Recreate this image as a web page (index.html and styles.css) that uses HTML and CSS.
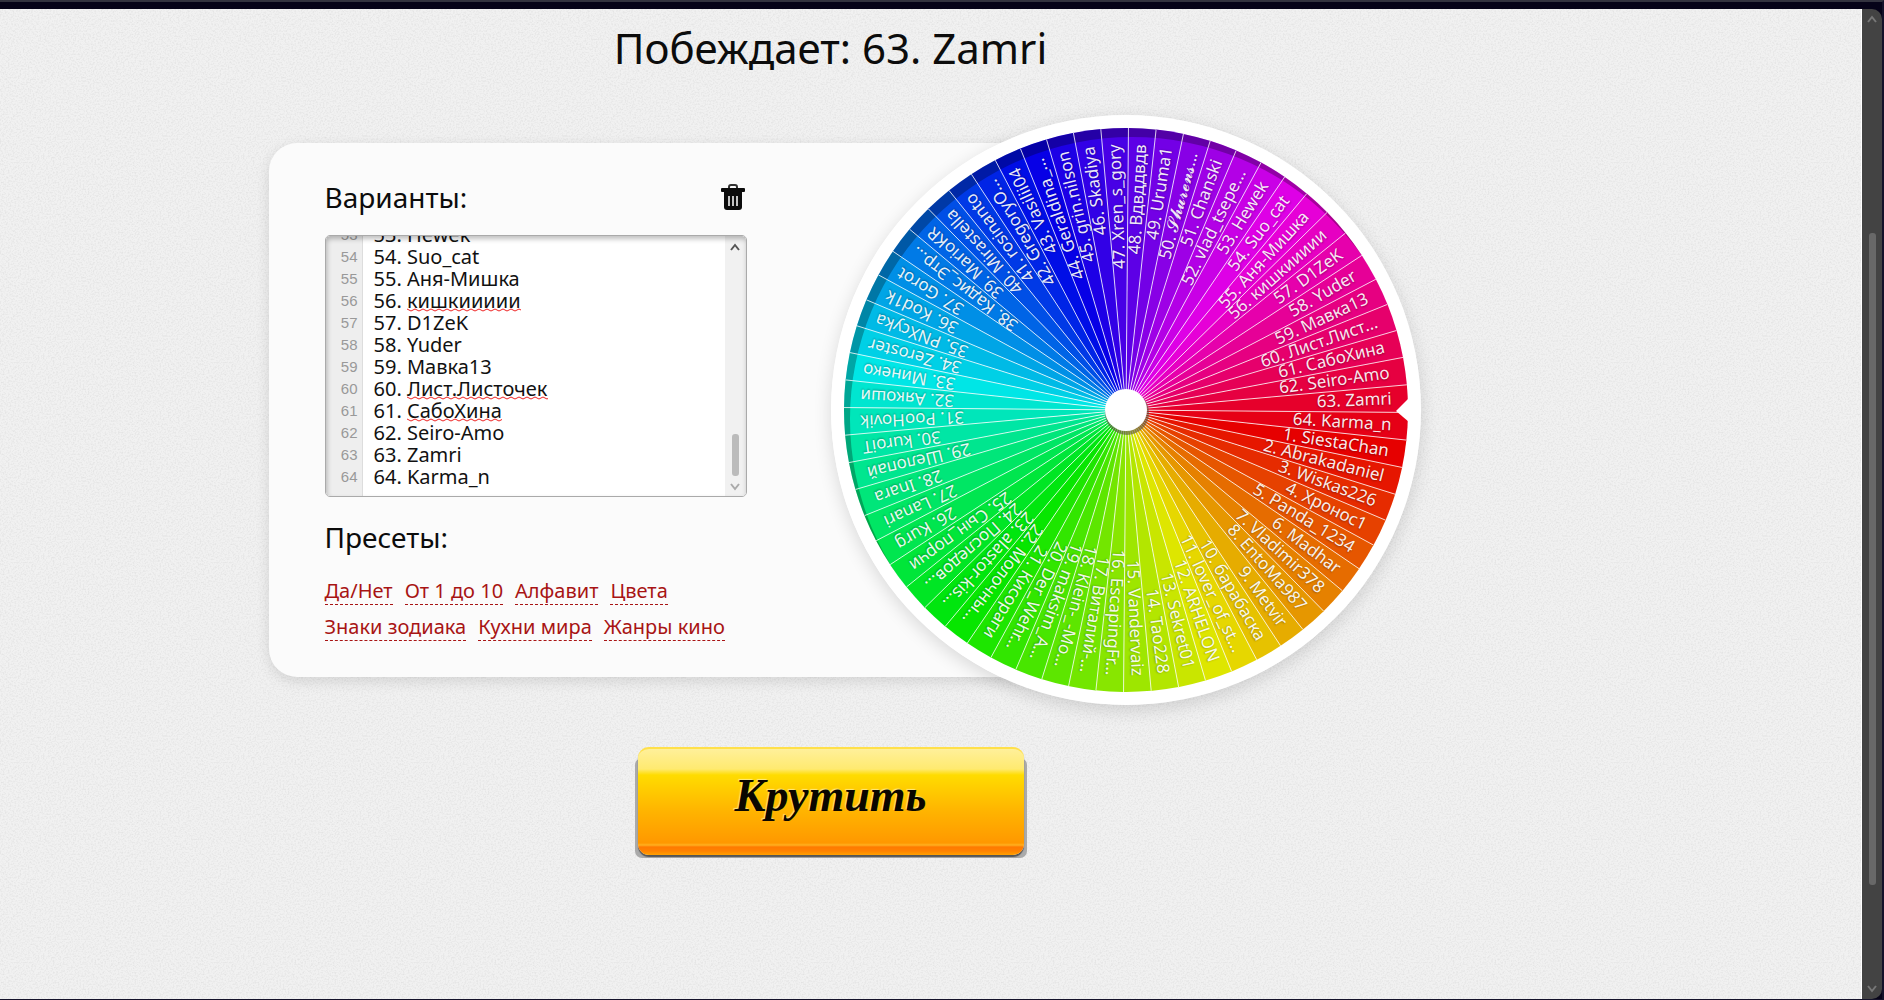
FILE: index.html
```html
<!DOCTYPE html>
<html lang="ru">
<head>
  <meta charset="utf-8">
  <title>Колесо фортуны</title>
  <link rel="stylesheet" href="styles.css">
</head>
<body>
  <div class="window">
    <main class="page">
      <h1 class="winner">Побеждает: 63. Zamri</h1>

      <div class="game">
        <section class="panel">
          <div class="panel-head">
            <label for="variants">Варианты:</label>
            <button type="button" class="clear" id="clear" aria-label="Очистить">
              <svg width="24" height="26" viewBox="0 0 24 26">
                <path d="M8 4V3Q8 1 10 1h4q2 0 2 2v1" fill="none" stroke="#333" stroke-width="2"/>
                <rect x="0" y="4" width="24" height="4" rx="1" fill="#0c0c0c"/>
                <path d="M3 8h18v15q0 3-3 3H6q-3 0-3-3z" fill="#0c0c0c"/>
                <path d="M8 12v10M12 12v10M16 12v10" stroke="#c4c4c4" stroke-width="2"/>
              </svg>
            </button>
          </div>

          <div class="editor">
            <div class="lines" id="lines" aria-hidden="true"></div>
            <div class="field">
              <div class="marks" id="marks" aria-hidden="true"></div>
              <textarea id="variants" spellcheck="false" wrap="off"></textarea>
            </div>
            <div class="editor-scroll" aria-hidden="true">
              <svg width="10" height="8" viewBox="0 0 10 8"><path d="M1 7 5 2l4 5" fill="none" stroke="#555" stroke-width="2"/></svg>
              <div class="editor-track" id="track"><div class="editor-thumb" id="thumb"></div></div>
              <svg width="10" height="8" viewBox="0 0 10 8"><path d="M1 1 5 6l4-5" fill="none" stroke="#aaa" stroke-width="2"/></svg>
            </div>
          </div>

          <h2>Пресеты:</h2>
          <nav class="presets">
            <a href="#">Да/Нет</a>
            <a href="#">От 1 до 10</a>
            <a href="#">Алфавит</a>
            <a href="#">Цвета</a>
            <a href="#">Знаки зодиака</a>
            <a href="#">Кухни мира</a>
            <a href="#">Жанры кино</a>
          </nav>
        </section>

        <div class="wheel">
          <svg viewBox="-295 -295 590 590" role="img" aria-label="Колесо">
            <clipPath id="disc"><circle r="282"/></clipPath>
            <circle r="295" fill="#fff"/>
            <g id="slices"></g>
            <g clip-path="url(#disc)">
              <path class="rim" fill-rule="evenodd" d="M-300-300H300V300H-300zM-276 9a282 282 0 1 0 564 0a282 282 0 1 0-564 0z"/>
            </g>
            <g id="rays"></g>
            <g id="labels"></g>
            <circle class="hub-shadow" cx="1" cy="3" r="22"/>
            <circle r="21" fill="#fff"/>
            <path d="M270 1 283-12V12z" fill="#fff"/>
          </svg>
        </div>
      </div>

      <button type="button" class="spin">Крутить</button>
    </main>

    <div class="page-scroll" aria-hidden="true">
      <svg width="10" height="8" viewBox="0 0 10 8"><path d="M1 7 5 2l4 5" fill="none" stroke="#777" stroke-width="2"/></svg>
      <div class="page-track"><div class="page-thumb"></div></div>
      <svg width="10" height="8" viewBox="0 0 10 8"><path d="M1 1 5 6l4-5" fill="none" stroke="#777" stroke-width="2"/></svg>
    </div>
  </div>

  <script src="wheel.js"></script>
</body>
</html>
```

FILE: styles.css
```css
* {
  box-sizing: border-box;
}
body {
  margin: 0;
  font-family: "Noto Sans", "Open Sans", sans-serif;
  color: #0c0c0c;
  background-color: #060318;
}
h1, h2 {
  margin: 0;
  font-weight: normal;
}
button {
  border: none;
  cursor: pointer;
}

/* window */
.window {
  display: flex;
  min-height: 100vh;
  border-top: 2px solid #33333f;
  border-right: 2px solid #14122a;
  border-bottom: 1px solid #14122a;
  padding-top: 7px;
}
.page {
  flex: 1;
  display: flex;
  flex-direction: column;
  align-items: center;
  padding: 10px 200px 60px 0;
  background-color: #f1f1f1;
  background-image: url("data:image/svg+xml,%3Csvg xmlns='http://www.w3.org/2000/svg' width='200' height='200'%3E%3Cfilter id='n'%3E%3CfeTurbulence type='fractalNoise' baseFrequency='.6' numOctaves='2' stitchTiles='stitch'/%3E%3CfeColorMatrix values='0 0 0 0 0 0 0 0 0 0 0 0 0 0 0 .14 0 0 0 -.06'/%3E%3C/filter%3E%3Crect width='200' height='200' filter='url(%23n)'/%3E%3C/svg%3E");
  border-right: 1px solid #fff;
}
.page-scroll {
  display: flex;
  flex-direction: column;
  align-items: center;
  width: 20px;
  padding: 6px 0;
  background-color: #434343;
  border-radius: 0 10px 10px 0;
}
.page-track {
  flex: 1;
  padding: 210px 0 100px;
  display: flex;
}
.page-thumb {
  width: 7px;
  border-radius: 3px;
  background-color: #686868;
}

.winner {
  font-size: 42px;
  line-height: 58px;
  margin-bottom: 38px;
}
.game {
  display: flex;
  align-items: center;
  width: 1124px;
  margin-bottom: 42px;
}

/* panel */
.panel {
  flex: none;
  width: 858px;
  padding: 35px 56px 36px;
  background-color: #fbfbfb;
  border-radius: 28px;
  box-shadow: 0 4px 14px rgba(0, 0, 0, 0.12);
}
.panel-head {
  display: flex;
  justify-content: space-between;
  align-items: center;
  width: 420px;
  margin-bottom: 19px;
}
.panel-head label,
.panel h2 {
  font-size: 28px;
  line-height: 38px;
}
.clear {
  padding: 0;
  width: 24px;
  height: 26px;
  background: none;
}
.clear svg {
  display: block;
}

.editor {
  display: flex;
  width: 422px;
  height: 262px;
  margin-bottom: 21px;
  border: 1px solid #aaa;
  border-radius: 5px;
  background-color: #fff;
  overflow: hidden;
  position: relative;
}
.editor::after {
  content: "";
  position: absolute;
  inset: 0;
  border-radius: 4px;
  box-shadow: inset 1px 3px 5px rgba(0, 0, 0, 0.25);
  pointer-events: none;
}
.lines {
  width: 37px;
  padding: 2px 4px 8px 0;
  overflow: hidden;
  background-color: #eee;
  border-right: 1px solid #ddd;
  font: 15px/22px "Liberation Sans", Arial, sans-serif;
  color: #999;
  text-align: right;
  white-space: pre;
}
.field {
  flex: 1;
  position: relative;
}
.marks,
.field textarea {
  width: 100%;
  height: 100%;
  padding: 2px 11px 8px;
  overflow: hidden;
}
.field textarea {
  display: block;
  position: relative;
  border: none;
  outline: none;
  background: none;
  font: 20px/22px "Noto Sans", "Open Sans", sans-serif;
  color: #111;
  white-space: pre;
  resize: none;
  overflow-y: scroll;
  scrollbar-width: none;
}
.marks {
  position: absolute;
  top: 0;
  left: 0;
}
.marks div {
  height: 22px;
}
.marks .wrong {
  background: url("data:image/svg+xml,%3Csvg xmlns='http://www.w3.org/2000/svg' width='8' height='4'%3E%3Cpath d='M0 1 4 3 8 1' stroke='%23e22' fill='none'/%3E%3C/svg%3E") 0 100% repeat-x;
}
.editor-scroll {
  display: flex;
  flex-direction: column;
  align-items: center;
  gap: 4px;
  width: 21px;
  padding: 7px 0 5px;
  background-color: #f1f1f1;
}
.editor-track {
  flex: 1;
  margin-bottom: 3px;
}
.editor-thumb {
  width: 7px;
  border-radius: 3px;
  background-color: #bbb;
}

.panel h2 {
  margin-bottom: 21px;
}
.presets {
  display: flex;
  flex-wrap: wrap;
  gap: 8px 12px;
  width: 420px;
}
.presets a {
  font-size: 20px;
  line-height: 27px;
  color: #a81414;
  text-decoration: none;
  border-bottom: 1px dashed #a81414;
}

/* wheel */
.wheel {
  flex: none;
  width: 590px;
  height: 590px;
  margin-left: -296px;
  border-radius: 50%;
  box-shadow: 0 5px 18px rgba(0, 0, 0, 0.14);
}
.wheel svg {
  display: block;
  width: 100%;
}
.rim {
  fill: rgba(0, 0, 0, 0.28);
}
.hub-shadow {
  fill: rgba(90, 80, 60, 0.6);
}
#rays line {
  stroke: #fff;
  stroke-opacity: 0.8;
  stroke-width: 1px;
}
#labels text {
  font-size: 17px;
  fill: #fff;
  fill-opacity: 0.92;
  text-anchor: end;
  text-shadow: 0 1px 2px rgba(0, 0, 0, 0.35);
}

.spin {
  width: 386px;
  height: 108px;
  padding: 0 0 14px;
  border-radius: 11px;
  border-top: 2px solid #ffe04a;
  background-image: linear-gradient(#fff09a 0, #ffea70 20px, #ffdc00 26px, #ffb400 62px, #ff9800 94px, #ffb020 96px, #ff7a00 98px, #ff8200 102px, #ffa000 106px);
  box-shadow: 0 2px 1px #555, -7px 7px 0 -4px #aaa, 7px 7px 0 -4px #aaa;
  font: italic bold 46px "Liberation Serif", "Times New Roman", serif;
  color: #0a0600;
  text-shadow: -1px -1px 1px rgba(255, 240, 160, 0.8);
}
```

FILE: wheel.js
```js
var names = [
  'SiestaChan', 'Abrakadaniel', 'Wiskas226', 'Хронос1', 'Panda_1234', 'Madhar', 'Vladimir378', 'EntoMa987',
  'Metvir', 'барабаска', 'lover_of_st...', 'ARHELON', 'Sekret01', 'Tao228', 'Vandervaiz', 'EscapingFr...',
  'Виталий-...', 'Klein-_-Mo...', 'maksim_A...', 'Der_Wehr...', 'Кисораги', 'Молочны...', 'alastor-kis...', 'Последов...',
  'Сын_порчи', 'Kurg', 'Lanari', 'Inara', 'Шелопай', 'kuroiT', 'PooHovik', 'Аякоши',
  'Минеко', 'Zeroster', 'PNXcyka', 'Kod1k', 'Gorot', 'Кадис_Этр...', 'MarioKR', 'Mirastella',
  'rosinanto', 'GregoryO...', 'Vasilii04', 'Geraldina_...', 'grin.nilson', 'Skadiya', 'Xren_s_gory', 'Вдвддвдв',
  'Uruma1', '𝓢𝓱𝓾𝓻𝓮𝓷𝓼...', 'Chanski', 'vlad_tsepe...', 'Hewek', 'Suo_cat', 'Аня-Мишка', 'кишкиииии',
  'D1ZeK', 'Yuder', 'Мавка13', 'Лист.Листочек', 'СабоХина', 'Seiro-Amo', 'Zamri', 'Karma_n'
];
var shortNames = { 'Лист.Листочек': 'Лист.Лист...' };
var misspelled = ['кишкиииии', 'Лист.Листочек', 'СабоХина'];

var area = document.getElementById('variants');
var lines = document.getElementById('lines');
var marks = document.getElementById('marks');
var track = document.getElementById('track');
var thumb = document.getElementById('thumb');

function svgElement(parent, tag, attrs) {
  var el = document.createElementNS('http://www.w3.org/2000/svg', tag);
  for (var key in attrs) {
    el.setAttribute(key, attrs[key]);
  }
  document.getElementById(parent).appendChild(el);
  return el;
}

function drawWheel() {
  var radius = 282;
  var step = 360 / names.length;
  var offset = 0.5; // where the wheel stopped

  names.forEach(function (name, i) {
    var from = i * step + step + offset;
    var a = from * Math.PI / 180;
    var b = (from + step + 0.1) * Math.PI / 180;
    var x = radius * Math.cos(a), y = radius * Math.sin(a);

    svgElement('slices', 'path', {
      d: 'M0 0L' + x + ' ' + y + 'A282 282 0 0 1 ' + radius * Math.cos(b) + ' ' + radius * Math.sin(b) + 'z',
      fill: 'hsl(' + i * step + ', 100%, 45%)'
    });
    svgElement('rays', 'line', { x1: 0, y1: 0, x2: x, y2: y });
    var text = svgElement('labels', 'text', {
      x: 266, y: 5, transform: 'rotate(' + (from + step / 2) + ')'
    });
    text.textContent = (i + 1) + '. ' + (shortNames[name] || name);
  });
}

function fillEditor() {
  var pen = document.createElement('canvas').getContext('2d');
  pen.font = getComputedStyle(area).font;

  area.value = names.map(function (name, i) {
    return (i + 1) + '. ' + name;
  }).join('\n');
  lines.textContent = names.map(function (name, i) { return i + 1; }).join('\n');

  names.forEach(function (name, i) {
    var mark = document.createElement('div');
    if (misspelled.indexOf(name) >= 0) {
      mark.className = 'wrong';
      mark.style.marginLeft = Math.round(pen.measureText((i + 1) + '. ').width) + 'px';
      mark.style.width = Math.round(pen.measureText(name).width) + 'px';
    }
    marks.appendChild(mark);
  });
}

function syncScroll() {
  lines.scrollTop = area.scrollTop;
  marks.scrollTop = area.scrollTop;
  var room = area.scrollHeight - area.clientHeight;
  var size = Math.max(42, track.clientHeight * area.clientHeight / area.scrollHeight);
  thumb.style.height = Math.round(size) + 'px';
  thumb.style.marginTop = (room ? Math.round((track.clientHeight - size) * area.scrollTop / room) : 0) + 'px';
}

drawWheel();
fillEditor();
area.addEventListener('scroll', syncScroll);
area.scrollTop = area.scrollHeight;
syncScroll();

document.getElementById('clear').addEventListener('click', function () {
  area.value = '';
  lines.textContent = '';
  marks.textContent = '';
  syncScroll();
});
```
